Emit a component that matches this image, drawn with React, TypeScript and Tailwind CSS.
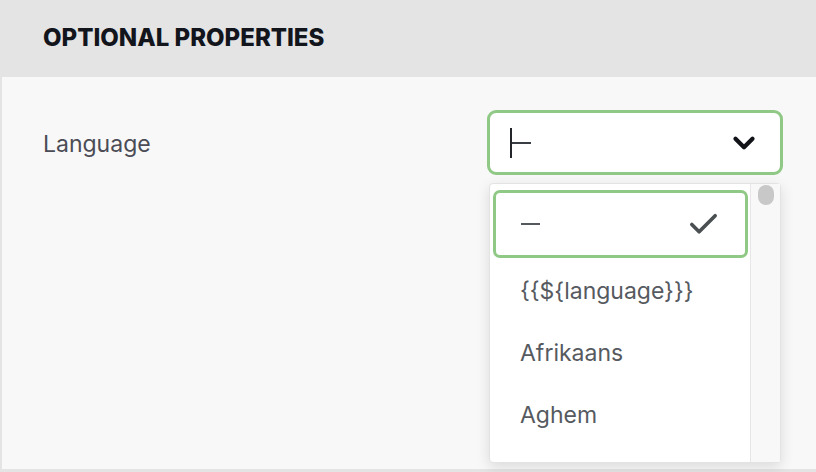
import { Check, ChevronDown } from 'lucide-react';

const options = ['{{${language}}}', 'Afrikaans', 'Aghem'];

export default function App() {
  return (
    <div className="w-[816px] h-[472px] bg-[#e4e4e4] flex flex-col overflow-hidden font-['Inter',sans-serif]">
      {/* Section header */}
      <div className="h-[77px] shrink-0 flex items-center pl-[43px] pb-[2px]">
        <h2 className="text-[24px] font-extrabold text-[#13151c]">OPTIONAL PROPERTIES</h2>
      </div>

      {/* Section body */}
      <div className="flex-1 ml-[2px] mb-[3px] bg-[#f8f8f8]">
        <div className="flex justify-between pl-[41px] pr-[33px] pt-[33px]">
          <label className="pt-[19px] text-[23px] leading-[30px] text-[#4b4c55]">Language</label>

          <div className="relative w-[296px]">
            {/* Select control */}
            <div className="h-[65px] flex items-center justify-between rounded-[9px] border-[3px] border-[#90c885] bg-white pl-[20px] pr-[19px]">
              <div className="flex items-center">
                <span className="w-[2px] h-[30px] bg-[#23252b]" />
                <span className="w-[19px] h-[2px] bg-[#3a3d44]" />
              </div>
              <ChevronDown className="w-[34px] h-[34px] text-[#111318]" strokeWidth={3} />
            </div>

            {/* Dropdown menu */}
            <div className="absolute left-[2px] top-[73px] w-[292px] h-[280px] flex rounded-[4px] border border-[#e3e3e3] bg-white shadow-[0_4px_14px_rgba(0,0,0,0.12)]">
              <ul className="flex-1 pl-[3px] pt-[6px] pr-[2px]">
                <li className="h-[68px] flex items-center justify-between rounded-[7px] border-[3px] border-[#90c885] pl-[25px] pr-[24px]">
                  <span className="w-[19px] h-[2px] bg-[#55595e]" />
                  <Check className="w-[35px] h-[35px] text-[#4a4f52]" strokeWidth={2.5} />
                </li>
                {options.map((o) => (
                  <li key={o} className="h-[62px] flex items-center pl-[27px] pt-[4px] text-[23px] text-[#565a60]">
                    {o}
                  </li>
                ))}
              </ul>
              <div className="w-[30px] border-l border-[#e6e6e6] bg-[#f8f8f8] flex justify-center pt-[1px]">
                <div className="w-[16px] h-[20px] rounded-full bg-[#c8c8c8]" />
              </div>
            </div>
          </div>
        </div>
      </div>
    </div>
  );
}
